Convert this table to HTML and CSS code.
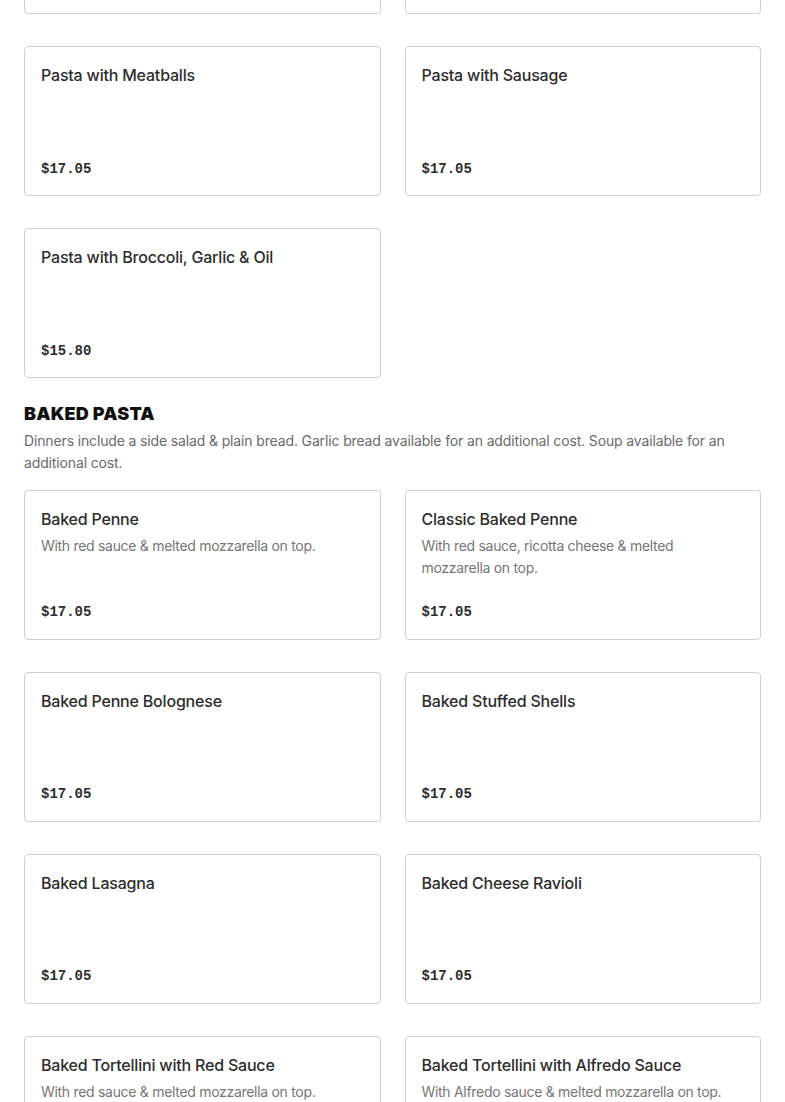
FILE: index.html
```html
<!DOCTYPE html>
<html>
<head>
<meta charset="utf-8">
<link rel="stylesheet" href="styles.css">
</head>
<body>
<main class="page">
  <div class="grid first">
    <div class="card"><h3 class="title">Pasta with Red Sauce</h3><div class="price">$15.80</div></div>
    <div class="card"><h3 class="title">Pasta with Meat Sauce</h3><div class="price">$17.05</div></div>
    <div class="card"><h3 class="title">Pasta with Meatballs</h3><div class="price">$17.05</div></div>
    <div class="card"><h3 class="title">Pasta with Sausage</h3><div class="price">$17.05</div></div>
    <div class="card"><h3 class="title">Pasta with Broccoli, Garlic &amp; Oil</h3><div class="price">$15.80</div></div>
  </div>

  <section class="section">
    <h2 class="heading">BAKED PASTA</h2>
    <p class="intro">Dinners include a side salad &amp; plain bread. Garlic bread available for an additional cost. Soup available for an additional cost.</p>
    <div class="grid">
      <div class="card"><h3 class="title">Baked Penne</h3><p class="desc">With red sauce &amp; melted mozzarella on top.</p><div class="price">$17.05</div></div>
      <div class="card"><h3 class="title">Classic Baked Penne</h3><p class="desc">With red sauce, ricotta cheese &amp; melted mozzarella on top.</p><div class="price">$17.05</div></div>
      <div class="card"><h3 class="title">Baked Penne Bolognese</h3><div class="price">$17.05</div></div>
      <div class="card"><h3 class="title">Baked Stuffed Shells</h3><div class="price">$17.05</div></div>
      <div class="card"><h3 class="title">Baked Lasagna</h3><div class="price">$17.05</div></div>
      <div class="card"><h3 class="title">Baked Cheese Ravioli</h3><div class="price">$17.05</div></div>
      <div class="card"><h3 class="title">Baked Tortellini with Red Sauce</h3><p class="desc">With red sauce &amp; melted mozzarella on top.</p><div class="price">$17.05</div></div>
      <div class="card"><h3 class="title">Baked Tortellini with Alfredo Sauce</h3><p class="desc">With Alfredo sauce &amp; melted mozzarella on top.</p><div class="price">$17.05</div></div>
    </div>
  </section>
</main>
</body>
</html>
```

FILE: styles.css
```css
* { box-sizing: border-box; }
html, body { margin: 0; padding: 0; background: #fff; }
body {
  font-family: Inter, "Liberation Sans", Arial, sans-serif;
  color: #2d2d2d;
  overflow: hidden;
}
.page {
  padding: 0 24px;
}
.grid {
  display: grid;
  grid-template-columns: 1fr 1fr;
  column-gap: 24px;
  row-gap: 32px;
}
.grid.first {
  margin-top: -136px;
}
.card {
  border: 1px solid #d0d0d0;
  border-radius: 4px;
  min-height: 150px;
  padding: 16px;
  display: flex;
  flex-direction: column;
}
.first .card {
  padding-bottom: 15px;
}
.title {
  margin: 0;
  font-size: 16px;
  font-weight: 500;
  line-height: 24px;
  letter-spacing: -0.2px;
  color: #2d2d2d;
}
.desc {
  margin: 4px 0 0;
  font-size: 14px;
  line-height: 22px;
  letter-spacing: -0.3px;
  color: #767676;
  padding-right: 10px;
}
.price {
  margin-top: auto;
  padding-top: 16px;
  font-family: "Liberation Mono", "DejaVu Sans Mono", monospace;
  font-weight: 700;
  font-size: 14px;
  line-height: 22px;
  color: #2d2d2d;
}
.section {
  margin-top: 24px;
}
.heading {
  margin: 0;
  font-size: 18px;
  font-weight: 900;
  line-height: 24px;
  color: #111;
  letter-spacing: 0.2px;
}
.intro {
  margin: 4px 0 16px;
  font-size: 14px;
  line-height: 22px;
  letter-spacing: -0.14px;
  color: #6a6a6a;
}
```
